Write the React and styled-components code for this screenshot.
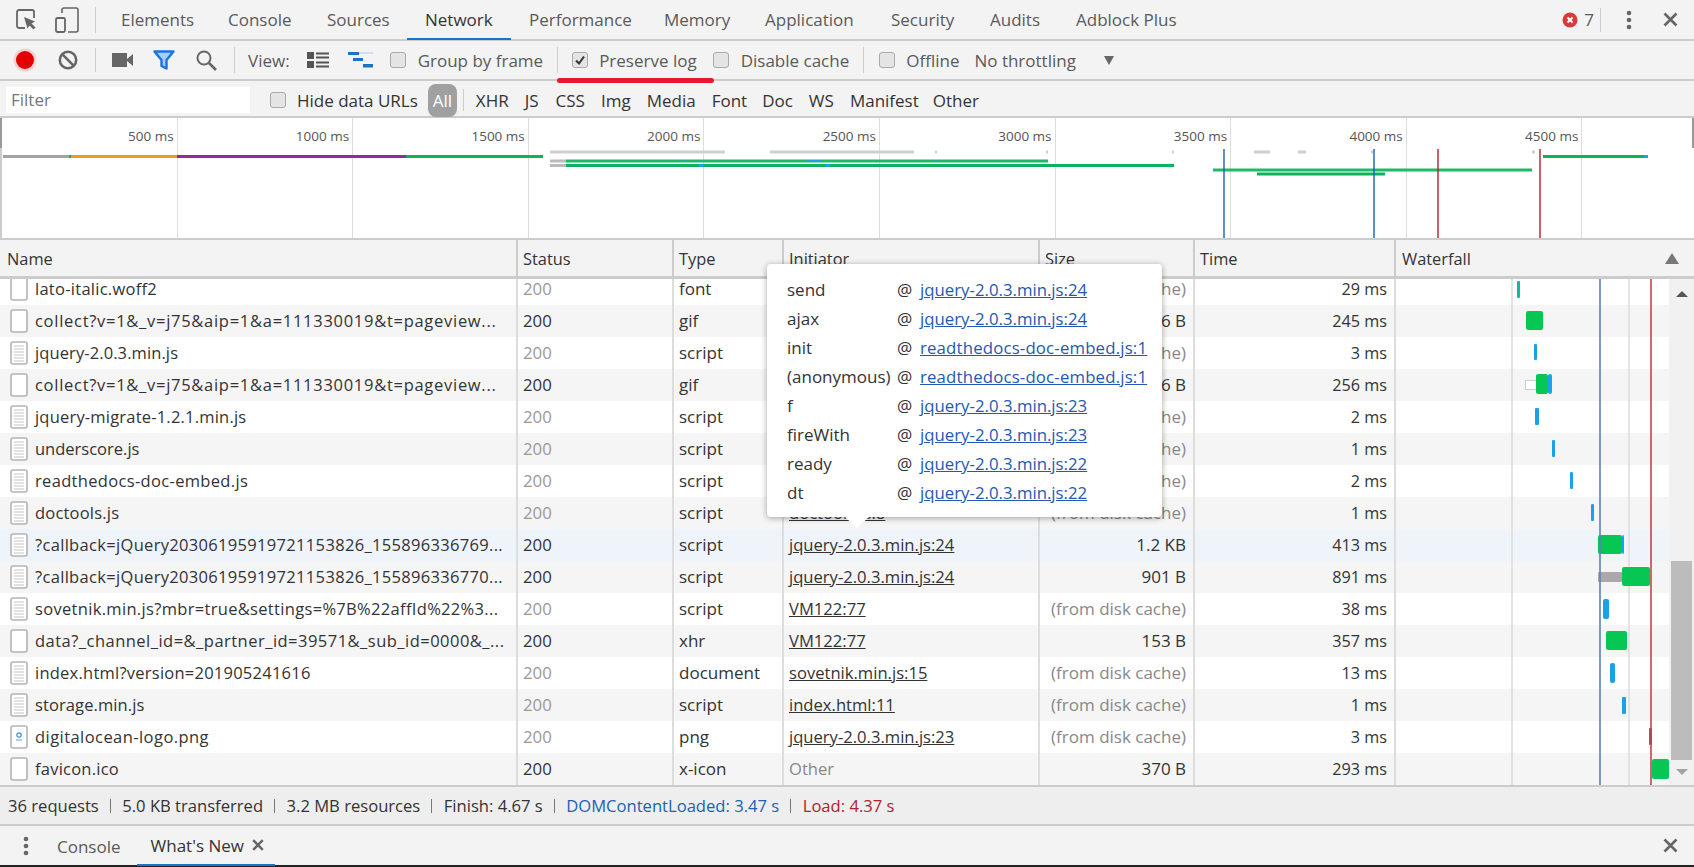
import React from "react";
import styled, { createGlobalStyle } from "styled-components";

const Global = createGlobalStyle`
  html, body { margin: 0; padding: 0; background: #f3f3f3; overflow: hidden; }
  * { box-sizing: border-box; }
`;

const Root = styled.div`
  position: relative; width: 1694px; height: 867px; overflow: hidden; background: #f3f3f3;
  font-family: "Open Sans", "Noto Sans", sans-serif; font-size: 17px; color: #333;
`;
const MainBar = styled.div`
  display: flex; align-items: center; height: 41px; border-bottom: 2px solid #ccc; padding-left: 16px;
`;
const Tab = styled.div`
  flex: none; width: ${p => p.$w}px; height: 39px; display: flex; align-items: center; padding-left: 18px; color: ${p => p.$active ? "#333" : "#5a5a5a"};
  border-bottom: 2px solid ${p => p.$active ? "#1a73c8" : "transparent"}; margin-bottom: -2px; white-space: nowrap;
`;
const VSep = styled.div`
  width: 1px; height: ${p => p.$h || 24}px; background: #ccc; margin-left: ${p => p.$ml || 0}px; margin-right: ${p => p.$mr || 0}px; flex: none;
`;
const Spacer = styled.div`flex: 1;`;
const ErrorCount = styled.span`margin-left: 6px; color: #5a5a5a;`;
const IconBox = styled.span`
  display: inline-flex; flex: none; margin-left: ${p => p.$ml || 0}px;
`;
const ToolBar = styled.div`
  display: flex; align-items: center; height: 40px; border-bottom: 2px solid #ccc; color: #5a5a5a;
`;
const Label = styled.span`
  flex: none; margin-left: ${p => p.$ml || 0}px; white-space: nowrap;
`;
const Box = styled.span`
  flex: none; width: 16px; height: 16px; border: 1px solid #aaa; border-radius: 3px; background: #e4e4e4;
  margin-left: ${p => p.$ml || 0}px; display: inline-flex; align-items: center; justify-content: center;
`;
const Caret = styled.span`
  margin-left: 28px; width: 0; height: 0; border-left: 5px solid transparent; border-right: 5px solid transparent; border-top: 9px solid #666;
`;
const Annot = styled.div`
  position: absolute; left: 557px; top: 78px; width: 157px; height: 5px; border-radius: 3px; background: #e8192c;
`;
const FilterBar = styled.div`
  display: flex; align-items: center; height: 37px; border-bottom: 2px solid #ccc; color: #333; padding-top: 3px;
`;
const FilterInput = styled.div`
  width: 244px; height: 26px; margin-left: 6px; background: #fff; color: #777; padding-left: 5px; line-height: 26px;
`;
const AllPill = styled.span`
  flex: none; width: 29px; height: 33px; margin-left: 10px; border-radius: 8px; background: #a0a0a0; color: #fff;
  display: flex; align-items: center; justify-content: center;
`;
const Overview = styled.div`
  position: relative; height: 120px; background: #fff; display: grid; grid-template-columns: repeat(9, 175.6px); border-left: 2px solid #ccc;
`;
const TimeCell = styled.div`
  border-right: 1px solid #ddd; text-align: right; padding: 8px 3px 0 0; font-size: 13.5px; color: #555; line-height: 20px;
`;
const OverSvg = styled.svg`
  position: absolute; left: -2px; top: 0;
`;
const Handle = styled.div`
  position: absolute; ${p => p.$right ? "right: 0;" : "left: -2px;"} top: 0; width: 2px; height: 30px; background: #999;
`;
const HeaderRow = styled.div`
  display: grid; grid-template-columns: 516px 156px 110px 256px 155px 201px 300px; height: 41px;
  border-top: 2px solid #ccc; border-bottom: 3px solid #ccc; font-size: 16.4px;
`;
const HeadCell = styled.div`
  position: relative; display: flex; align-items: center; padding-left: ${p => p.$pl || 5}px; color: #333; border-left: ${p => p.$first ? 0 : "2px solid #ccc"};
`;
const SortMark = styled.span`
  position: absolute; right: 15px; top: 13px; width: 0; height: 0;
  border-left: 7px solid transparent; border-right: 7px solid transparent; border-bottom: 11px solid #777;
`;
const TableWrap = styled.div`
  display: flex; height: 506px; background: #fff;
`;
const TableArea = styled.div`
  position: relative; flex: 1; overflow: hidden;
`;
const Rows = styled.div`margin-top: -6px;`;
const Row = styled.div`
  display: grid; grid-template-columns: 516px 156px 110px 256px 155px 201px 275px; height: 32px; line-height: 32px;
  background: ${p => p.$hl ? "#eff4fb" : p.$alt ? "#f5f5f5" : "#fff"};
`;
const Cell = styled.div`
  position: relative; white-space: nowrap; overflow: hidden; padding: 0 7px 0 5px; border-left: ${p => p.$first ? 0 : "2px solid #ddd"};
  text-align: ${p => p.$right ? "right" : "left"}; color: ${p => p.$c || "#333"}; font-size: ${p => p.$fs || 16.6}px;
`;
const NameCell = styled(Cell)`
  display: flex; align-items: center; padding-left: 10px; gap: 7px; font-size: 16.5px;
`;
const NameText = styled.span`
  letter-spacing: ${p => p.$ls || 0}px;
`;
const LinkText = styled.span`
  text-decoration: underline; color: #333;
`;
const OtherText = styled.span`
  color: #888;
`;
const ChartSvg = styled.svg`
  position: absolute; left: 1395px; top: 0;
`;
const ScrollBar = styled.div`
  position: relative; width: 25px; background: #f1f1f1; display: flex; flex-direction: column; align-items: center; padding: 0 2px;
`;
const ArrowUp = styled.span`
  margin-top: 12px; width: 0; height: 0; border-left: 6px solid transparent; border-right: 6px solid transparent; border-bottom: 6px solid #555;
`;
const Thumb = styled.div`
  margin-top: 264px; width: 21px; height: 199px; background: #bcbcbc;
`;
const ArrowDown = styled.span`
  margin-top: 9px; width: 0; height: 0; border-left: 6px solid transparent; border-right: 6px solid transparent; border-top: 6px solid #a3a3a3;
`;
const StatusBar = styled.div`
  display: flex; align-items: center; height: 41px; background: #eee; border-top: 2px solid #ccc; border-bottom: 2px solid #ccc; padding-left: 8px; color: #333; font-size: 16.6px;
`;
const StatSep = styled.span`
  width: 1px; height: 14px; background: #777; margin: 0 11.5px 0 11px; flex: none;
`;
const StatText = styled.span`
  color: ${p => p.$c || "#333"}; white-space: nowrap;
`;
const Drawer = styled.div`
  display: flex; align-items: center; height: 41px; border-bottom: 2px solid #222; color: #5a5a5a;
`;
const DrawerTab = styled.div`
  flex: none; height: 41px; display: flex; align-items: center; gap: 8px; margin-left: ${p => p.$ml || 0}px;
  padding-left: ${p => p.$active ? "14px" : "0"}; width: ${p => p.$active ? "138px" : "auto"}; white-space: nowrap;
  color: ${p => p.$active ? "#333" : "#5a5a5a"}; border-bottom: ${p => p.$active ? "2px solid #1a73c8" : "0"}; padding-top: 1px;
`;
const Popover = styled.div`
  position: absolute; left: 767px; top: 264px; width: 395px; height: 253px; background: #fff; border-radius: 4px;
  box-shadow: 0 1px 6px rgba(0,0,0,.35); padding: 11px 0 0 20px; white-space: nowrap;
  &::after {
    content: ""; position: absolute; left: 78px; top: 100%; width: 0; height: 0;
    border-left: 12px solid transparent; border-right: 12px solid transparent; border-top: 11px solid #fff;
  }
`;
const PopRow = styled.div`
  display: grid; grid-template-columns: 110px 23px auto; height: 29px; line-height: 29px; color: #333;
`;
const PopLink = styled.span`
  text-decoration: underline; color: #2458b3; font-size: 16.8px; letter-spacing: ${p => p.$ls || 0}px;
`;

const FileIcon = ({ kind }) => (
  <svg width="18" height="24" viewBox="0 0 18 24" style={{ flex: "none" }}>
    <rect x="1" y="1" width="16" height="22" rx="2" fill="#fff" stroke="#b4b4b4" strokeWidth="1.6" />
    {kind === "s" && [5, 8, 11, 14, 17, 20].map(y => <path key={y} d={`M4 ${y}H14`} stroke="#d6d6d6" strokeWidth="1.4" />)}
    {kind === "i" && <><circle cx="9" cy="10" r="2.2" fill="none" stroke="#3a8fd8" strokeWidth="1.2" /><path d="M6 15H12" stroke="#8dbce6" strokeWidth="1.4" /></>}
  </svg>
);

const X = ({ size = 15, c = "#666", w = 2.6 }) => (
  <svg width={size} height={size} viewBox="0 0 15 15"><path d="M1.5 1.5L13.5 13.5M13.5 1.5L1.5 13.5" stroke={c} strokeWidth={w} /></svg>
);
const Dots = () => (
  <svg width="6" height="20" viewBox="0 0 6 20"><circle cx="3" cy="3" r="2.3" fill="#666" /><circle cx="3" cy="10" r="2.3" fill="#666" /><circle cx="3" cy="17" r="2.3" fill="#666" /></svg>
);
const Check = ({ on, ml }) => (
  <Box $ml={ml}>
    {on && <svg width="12" height="12" viewBox="0 0 12 12"><path d="M2 6.5L5 9.5L10 2.5" fill="none" stroke="#333" strokeWidth="2" /></svg>}
  </Box>
);

const rows = [
  { n: "lato-italic.woff2", ls: 0.27, k: "b", st: 0, t: "font", sz: "(from disk cache)", ms: "29 ms" },
  { n: "collect?v=1&_v=j75&aip=1&a=111330019&t=pageview...", ls: 0.72, k: "b", st: 1, t: "gif", sz: "36 B", ms: "245 ms" },
  { n: "jquery-2.0.3.min.js", ls: 0.1, k: "s", st: 0, t: "script", sz: "(from disk cache)", ms: "3 ms" },
  { n: "collect?v=1&_v=j75&aip=1&a=111330019&t=pageview...", ls: 0.72, k: "b", st: 1, t: "gif", sz: "36 B", ms: "256 ms" },
  { n: "jquery-migrate-1.2.1.min.js", ls: 0.2, k: "s", st: 0, t: "script", sz: "(from disk cache)", ms: "2 ms" },
  { n: "underscore.js", ls: 0, k: "s", st: 0, t: "script", sz: "(from disk cache)", ms: "1 ms" },
  { n: "readthedocs-doc-embed.js", ls: 0.33, k: "s", st: 0, t: "script", sz: "(from disk cache)", ms: "2 ms" },
  { n: "doctools.js", ls: 0.2, k: "s", st: 0, t: "script", i: "doctools.js:8", sz: "(from disk cache)", ms: "1 ms" },
  { n: "?callback=jQuery20306195919721153826_155896336769...", ls: 0.32, k: "s", st: 1, t: "script", i: "jquery-2.0.3.min.js:24", sz: "1.2 KB", ms: "413 ms", hl: 1 },
  { n: "?callback=jQuery20306195919721153826_155896336770...", ls: 0.32, k: "s", st: 1, t: "script", i: "jquery-2.0.3.min.js:24", sz: "901 B", ms: "891 ms" },
  { n: "sovetnik.min.js?mbr=true&settings=%7B%22affId%22%3...", ls: 0.32, k: "s", st: 0, t: "script", i: "VM122:77", sz: "(from disk cache)", ms: "38 ms" },
  { n: "data?_channel_id=&_partner_id=39571&_sub_id=0000&_...", ls: 0.48, k: "b", st: 1, t: "xhr", i: "VM122:77", sz: "153 B", ms: "357 ms" },
  { n: "index.html?version=201905241616", ls: 0.24, k: "s", st: 0, t: "document", i: "sovetnik.min.js:15", sz: "(from disk cache)", ms: "13 ms" },
  { n: "storage.min.js", ls: 0.1, k: "s", st: 0, t: "script", i: "index.html:11", sz: "(from disk cache)", ms: "1 ms" },
  { n: "digitalocean-logo.png", ls: 0.44, k: "i", st: 0, t: "png", i: "jquery-2.0.3.min.js:23", sz: "(from disk cache)", ms: "3 ms" },
  { n: "favicon.ico", ls: 0.23, k: "b", st: 1, t: "x-icon", other: 1, sz: "370 B", ms: "293 ms" },
];

const popRows = [
  ["send", "jquery-2.0.3.min.js:24"], ["ajax", "jquery-2.0.3.min.js:24"],
  ["init", "readthedocs-doc-embed.js:1", 0.17], ["(anonymous)", "readthedocs-doc-embed.js:1", 0.17],
  ["f", "jquery-2.0.3.min.js:23"], ["fireWith", "jquery-2.0.3.min.js:23"],
  ["ready", "jquery-2.0.3.min.js:22"], ["dt", "jquery-2.0.3.min.js:22"],
];

const G = "#07c653", B = "#1ba1e8";
const bars = [
  [1517, 1520, 281, 298, "#12b8a2"], [1526, 1543, 311, 330, G], [1534, 1537, 344, 360, B],
  [1536, 1548, 374, 394, G], [1548, 1552, 374, 394, B], [1535, 1539, 408, 425, B],
  [1552, 1555, 440, 457, B], [1570, 1573, 472, 489, B], [1591, 1594, 504, 521, B],
  [1622, 1624, 535, 554, B], [1598, 1622, 535, 554, G], [1598, 1622, 572, 582, "#a9a9a9"],
  [1622, 1650, 567, 586, G], [1603, 1609, 599, 619, B], [1606, 1627, 631, 650, G],
  [1610, 1615, 663, 683, B], [1622, 1626, 697, 714, B], [1649, 1652, 728, 745, "#6b6b6b"],
  [1652, 1669, 759, 779, G],
];

const OG = "#0bb35c", LG = "#cfcfcf";
const over = [
  [3, 69, 155, 158, "#a3a3a3"], [69, 71, 155, 158, OG], [71, 177, 155, 158, "#f39c18"], [177, 406, 155, 158, "#8e2c9e"], [406, 543, 155, 158, OG],
  [550, 725, 150.5, 153.5, LG], [770, 914, 150.5, 153.5, LG], [935, 937, 150.5, 153.5, LG], [1046, 1048, 150.5, 153.5, LG],
  [1172, 1174, 150.5, 153.5, LG], [1254, 1270, 150.5, 153.5, LG], [1298, 1306, 150.5, 153.5, LG], [1371, 1373, 150.5, 153.5, LG], [1532, 1535, 150.5, 153.5, LG],
  [550, 566, 159.5, 162.5, "#bbb"], [566, 1048, 159.5, 162.5, "#22b866"], [683, 686, 160, 162, B], [808, 821, 160, 162, B], [934, 936, 160, 162, B],
  [550, 566, 164, 167, "#bbb"], [566, 1174, 164, 167, OG], [699, 703, 164, 167, B], [826, 830, 164, 167, B],
  [1543, 1644, 155, 158, OG], [1644, 1648, 155, 158, B], [1213, 1532, 168.5, 171.5, "#22b866"], [1257, 1385, 172.5, 175.5, OG],
];

export default function App() {
  return (
    <Root>
      <Global />
      <MainBar>
        <IconBox>
          <svg width="21" height="21" viewBox="0 0 21 21" fill="none">
            <path d="M9 19H3a2 2 0 0 1-2-2V3a2 2 0 0 1 2-2h13a2 2 0 0 1 2 2v6" stroke="#666" strokeWidth="1.8" />
            <path d="M8 8L19 12.5L15.5 14.5L19.5 18.5L17.5 20.5L13.5 16.5L11.5 19.5Z" fill="#666" />
          </svg>
        </IconBox>
        <IconBox $ml={18}>
          <svg width="24" height="26" viewBox="0 0 24 26" fill="none">
            <path d="M7 6V3a2 2 0 0 1 2-2h12a2 2 0 0 1 2 2v20a2 2 0 0 1-2 2h-8" stroke="#666" strokeWidth="1.6" />
            <rect x="1" y="11" width="9" height="14" rx="1.5" stroke="#666" strokeWidth="1.8" />
          </svg>
        </IconBox>
        <VSep $ml={16} $mr={7} $h={26} />
        <Tab $w={107}>Elements</Tab>
        <Tab $w={99}>Console</Tab>
        <Tab $w={98}>Sources</Tab>
        <Tab $w={104} $active>Network</Tab>
        <Tab $w={135}>Performance</Tab>
        <Tab $w={101}>Memory</Tab>
        <Tab $w={126}>Application</Tab>
        <Tab $w={99}>Security</Tab>
        <Tab $w={86}>Audits</Tab>
        <Tab $w={140}>Adblock Plus</Tab>
        <Spacer />
        <svg width="16" height="16" viewBox="0 0 16 16"><circle cx="8" cy="8" r="7.5" fill="#d93a3a" /><path d="M5.5 5.5L10.5 10.5M10.5 5.5L5.5 10.5" stroke="#fff" strokeWidth="2" /></svg>
        <ErrorCount>7</ErrorCount>
        <VSep $ml={6} $mr={25} />
        <Dots />
        <IconBox $ml={31}><X /></IconBox>
        <IconBox $ml={16} />
      </MainBar>
      <ToolBar>
        <IconBox $ml={13}>
          <svg width="24" height="24" viewBox="0 0 24 24">
            <circle cx="12" cy="12" r="11.5" fill="#f4b6b6" opacity=".55" /><circle cx="12" cy="12" r="9" fill="#e30000" />
          </svg>
        </IconBox>
        <IconBox $ml={21}>
          <svg width="20" height="20" viewBox="0 0 20 20" fill="none"><circle cx="10" cy="10" r="8.2" stroke="#666" strokeWidth="2.6" /><path d="M4.2 4.2L15.8 15.8" stroke="#666" strokeWidth="2.6" /></svg>
        </IconBox>
        <VSep $ml={17} />
        <IconBox $ml={16}>
          <svg width="21" height="14" viewBox="0 0 21 14"><rect x="0" y="0" width="15" height="14" fill="#666" /><path d="M15 6L21 1V13L15 8Z" fill="#666" /></svg>
        </IconBox>
        <IconBox $ml={20}>
          <svg width="22" height="20" viewBox="0 0 22 20" fill="none"><path d="M1.5 1.5H20.5L13.5 10V18.5L8.5 16V10Z" fill="#a9cdf3" stroke="#1a73e8" strokeWidth="2.4" strokeLinejoin="round" /></svg>
        </IconBox>
        <IconBox $ml={21}>
          <svg width="21" height="21" viewBox="0 0 21 21" fill="none"><circle cx="8" cy="8" r="6.5" stroke="#666" strokeWidth="2" /><path d="M13 13L20 20" stroke="#666" strokeWidth="2.6" /></svg>
        </IconBox>
        <VSep $ml={17} $h={26} />
        <Label $ml={13}>View:</Label>
        <IconBox $ml={17}>
          <svg width="22" height="16" viewBox="0 0 22 16"><rect x="0" y="0" width="7" height="7" fill="#555" /><rect x="0" y="9" width="7" height="7" fill="#555" /><path d="M9 1.5H22M9 5.5H22M9 10.5H22M9 14.5H22" stroke="#555" strokeWidth="2" /></svg>
        </IconBox>
        <IconBox $ml={19}>
          <svg width="25" height="16" viewBox="0 0 25 16"><rect x="0" y="0" width="25" height="2" fill="#cfe0f5" /><rect x="0" y="0" width="11" height="3" fill="#1a73c8" /><rect x="5" y="6" width="10" height="3" fill="#1a73c8" /><rect x="15" y="12" width="10" height="3.5" fill="#1a73c8" /></svg>
        </IconBox>
        <Check ml={17} />
        <Label $ml={12}>Group by frame</Label>
        <VSep $ml={14} $h={26} />
        <Check on ml={14} />
        <Label $ml={11}>Preserve log</Label>
        <Check ml={16} />
        <Label $ml={12}>Disable cache</Label>
        <VSep $ml={14} $h={26} />
        <Check ml={15} />
        <Label $ml={11}>Offline</Label>
        <Label $ml={15}>No throttling</Label>
        <Caret />
      </ToolBar>
      <Annot />
      <FilterBar>
        <FilterInput>Filter</FilterInput>
        <Check ml={20} />
        <Label $ml={11}>Hide data URLs</Label>
        <AllPill>All</AllPill>
        <VSep $ml={6} $h={22} />
        <Label $ml={12}>XHR</Label>
        <Label $ml={16}>JS</Label>
        <Label $ml={17}>CSS</Label>
        <Label $ml={16}>Img</Label>
        <Label $ml={16}>Media</Label>
        <Label $ml={16}>Font</Label>
        <Label $ml={15}>Doc</Label>
        <Label $ml={16}>WS</Label>
        <Label $ml={16}>Manifest</Label>
        <Label $ml={14}>Other</Label>
      </FilterBar>
      <Overview>
        {["500 ms", "1000 ms", "1500 ms", "2000 ms", "2500 ms", "3000 ms", "3500 ms", "4000 ms", "4500 ms"].map(t => <TimeCell key={t}>{t}</TimeCell>)}
        <OverSvg width="1694" height="120" viewBox="0 118 1694 120">
          {over.map(([a, b, c, d, f], i) => <rect key={i} x={a} y={c} width={b - a} height={d - c} fill={f} />)}
          <path d="M1224 149V238M1374 149V238" stroke="#1a62b4" strokeWidth="1.4" />
          <path d="M1438 149V238M1540 149V238" stroke="#b81f30" strokeWidth="1.4" />
        </OverSvg>
        <Handle />
        <Handle $right />
      </Overview>
      <HeaderRow>
        <HeadCell $first $pl={7}>Name</HeadCell>
        <HeadCell>Status</HeadCell>
        <HeadCell>Type</HeadCell>
        <HeadCell>Initiator</HeadCell>
        <HeadCell>Size</HeadCell>
        <HeadCell>Time</HeadCell>
        <HeadCell $pl={6}>Waterfall<SortMark /></HeadCell>
      </HeaderRow>
      <TableWrap>
        <TableArea>
          <Rows>
            {rows.map((r, i) => (
              <Row key={i} $alt={i % 2 === 1} $hl={r.hl}>
                <NameCell $first><FileIcon kind={r.k} /><NameText $ls={r.ls}>{r.n}</NameText></NameCell>
                <Cell $fs={16.8} $c={r.st ? "#333" : "#999"}>200</Cell>
                <Cell $fs={17}>{r.t}</Cell>
                <Cell>{r.other ? <OtherText>Other</OtherText> : r.i ? <LinkText>{r.i}</LinkText> : null}</Cell>
                <Cell $right $fs={17} $c={r.sz[0] === "(" ? "#888" : "#333"}>{r.sz}</Cell>
                <Cell $right $fs={16.2}>{r.ms}</Cell>
                <Cell />
              </Row>
            ))}
          </Rows>
          <ChartSvg width="274" height="506" viewBox="1395 279 274 506">
            <path d="M1512 279V785M1629 279V785" stroke="#dcdcdc" strokeWidth="1.5" />
            <rect x="1525.5" y="380.5" width="11" height="9" fill="#fff" stroke="#ccc" />
            {bars.map(([a, b, c, d, f], i) => <rect key={i} x={a} y={c} width={b - a} height={d - c} rx={d - c > 18 ? 2 : 1} fill={f} />)}
            <path d="M1600 279V785" stroke="#5b82b8" strokeWidth="1.6" />
            <path d="M1651 279V785" stroke="#c0444e" strokeWidth="1.6" />
          </ChartSvg>
        </TableArea>
        <ScrollBar>
          <ArrowUp />
          <Thumb />
          <ArrowDown />
        </ScrollBar>
      </TableWrap>
      <StatusBar>
        <StatText>36 requests</StatText><StatSep />
        <StatText>5.0 KB transferred</StatText><StatSep />
        <StatText>3.2 MB resources</StatText><StatSep />
        <StatText>Finish: 4.67 s</StatText><StatSep />
        <StatText $c="#1a62b4">DOMContentLoaded: 3.47 s</StatText><StatSep />
        <StatText $c="#b02030">Load: 4.37 s</StatText>
      </StatusBar>
      <Drawer>
        <IconBox $ml={23}><Dots /></IconBox>
        <DrawerTab $ml={28}>Console</DrawerTab>
        <DrawerTab $active $ml={16}>What's New <X size={12} w={3} /></DrawerTab>
        <Spacer />
        <IconBox><X /></IconBox>
        <IconBox $ml={16} />
      </Drawer>
      <Popover>
        {popRows.map(([a, b, ls], i) => (
          <PopRow key={i}><span>{a}</span><span>@</span><PopLink $ls={ls}>{b}</PopLink></PopRow>
        ))}
      </Popover>
    </Root>
  );
}
